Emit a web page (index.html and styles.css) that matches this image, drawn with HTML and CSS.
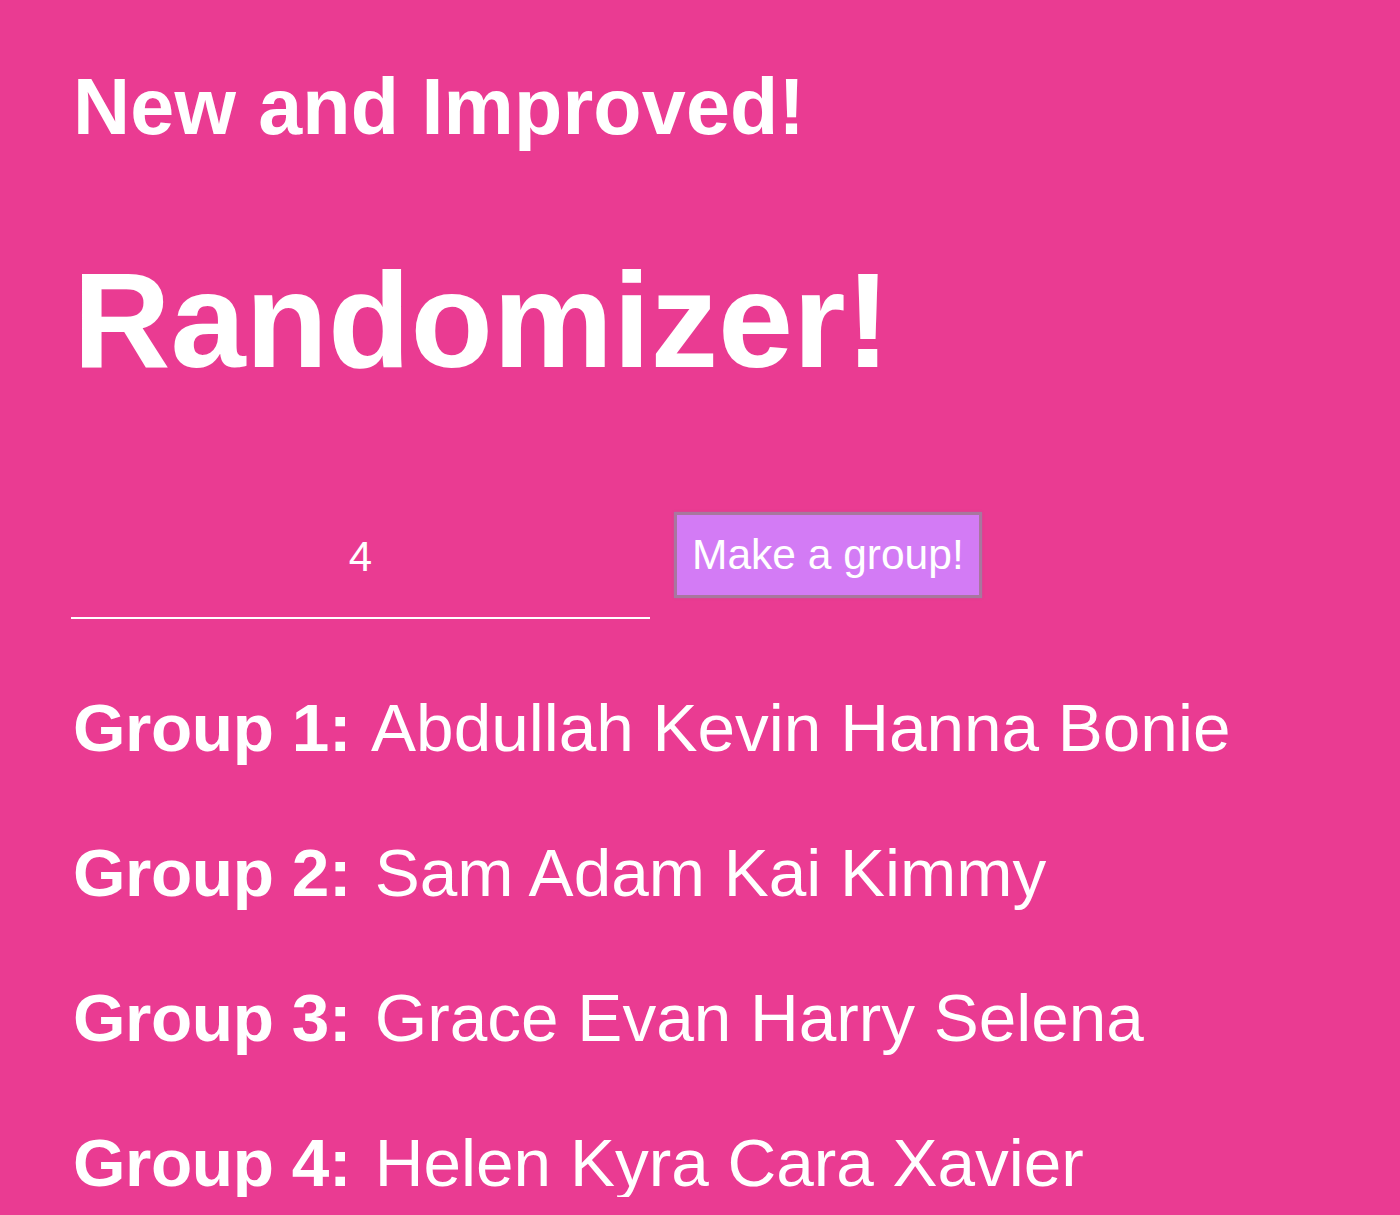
FILE: index.html
```html
<!DOCTYPE html>
<html lang="en">
<head>
    <meta charset="UTF-8">
    <title>Randomizer!</title>
    <link rel="stylesheet" href="styles.css">
</head>
<body>
    <main class="page">
        <h2 class="tagline">New and Improved!</h2>
        <h1 class="title">Randomizer!</h1>

        <!-- group size + trigger -->
        <form class="picker">
            <input class="size-input" type="text" value="4">
            <button class="make-btn" type="button">Make a group!</button>
        </form>

        <!-- generated groups -->
        <div class="groups">
            <p class="group"><b>Group 1:</b> Abdullah Kevin Hanna Bonie</p>
            <p class="group"><b>Group 2:</b> Sam Adam Kai Kimmy</p>
            <p class="group"><b>Group 3:</b> Grace Evan Harry Selena</p>
            <p class="group"><b>Group 4:</b> Helen Kyra Cara Xavier</p>
        </div>
    </main>
</body>
</html>
```

FILE: styles.css
```css
:root {
    --pink: #EA3B92;
    --violet: #D37BF5;
    --violet-edge: #A8779E;
}

html, body {
    margin: 0;
    background: var(--pink);
}

body {
    font-family: "Liberation Sans", Arial, Helvetica, sans-serif;
    color: #fff;
}

.page {
    padding: 67px 0 0 73px;
}

.tagline {
    margin: 0;
    font-size: 79px;
    line-height: 1;
    font-weight: bold;
    letter-spacing: 0.2px;
}

.title {
    margin: 107px 0 0;
    font-size: 135px;
    line-height: 1;
    font-weight: bold;
}

/* input + button row */
.picker {
    display: flex;
    align-items: flex-start;
    gap: 24px;
    margin-top: 124px;
}

.size-input {
    box-sizing: border-box;
    width: 579px;
    height: 107px;
    margin: 0 0 0 -2px;
    padding: 0 0 16px;
    border: none;
    border-bottom: 2px solid #fff;
    background: transparent;
    color: #fff;
    font-family: inherit;
    font-size: 42px;
    text-align: center;
    outline: none;
}

.make-btn {
    box-sizing: border-box;
    height: 86px;
    padding: 0 15px;
    border: 3px solid var(--violet-edge);
    box-shadow: 0 0 2px rgba(150, 110, 150, 0.6);
    background: var(--violet);
    color: #fff;
    font-family: inherit;
    font-size: 42.5px;
    line-height: 1;
    cursor: pointer;
}

/* group list */
.groups {
    display: flex;
    flex-direction: column;
    gap: 77.5px;
    margin-top: 75px;
}

.group {
    margin: 0;
    font-size: 67.5px;
    line-height: 1;
}

.group b {
    margin-right: 5px;
    font-weight: bold;
    letter-spacing: -0.4px;
}
```
